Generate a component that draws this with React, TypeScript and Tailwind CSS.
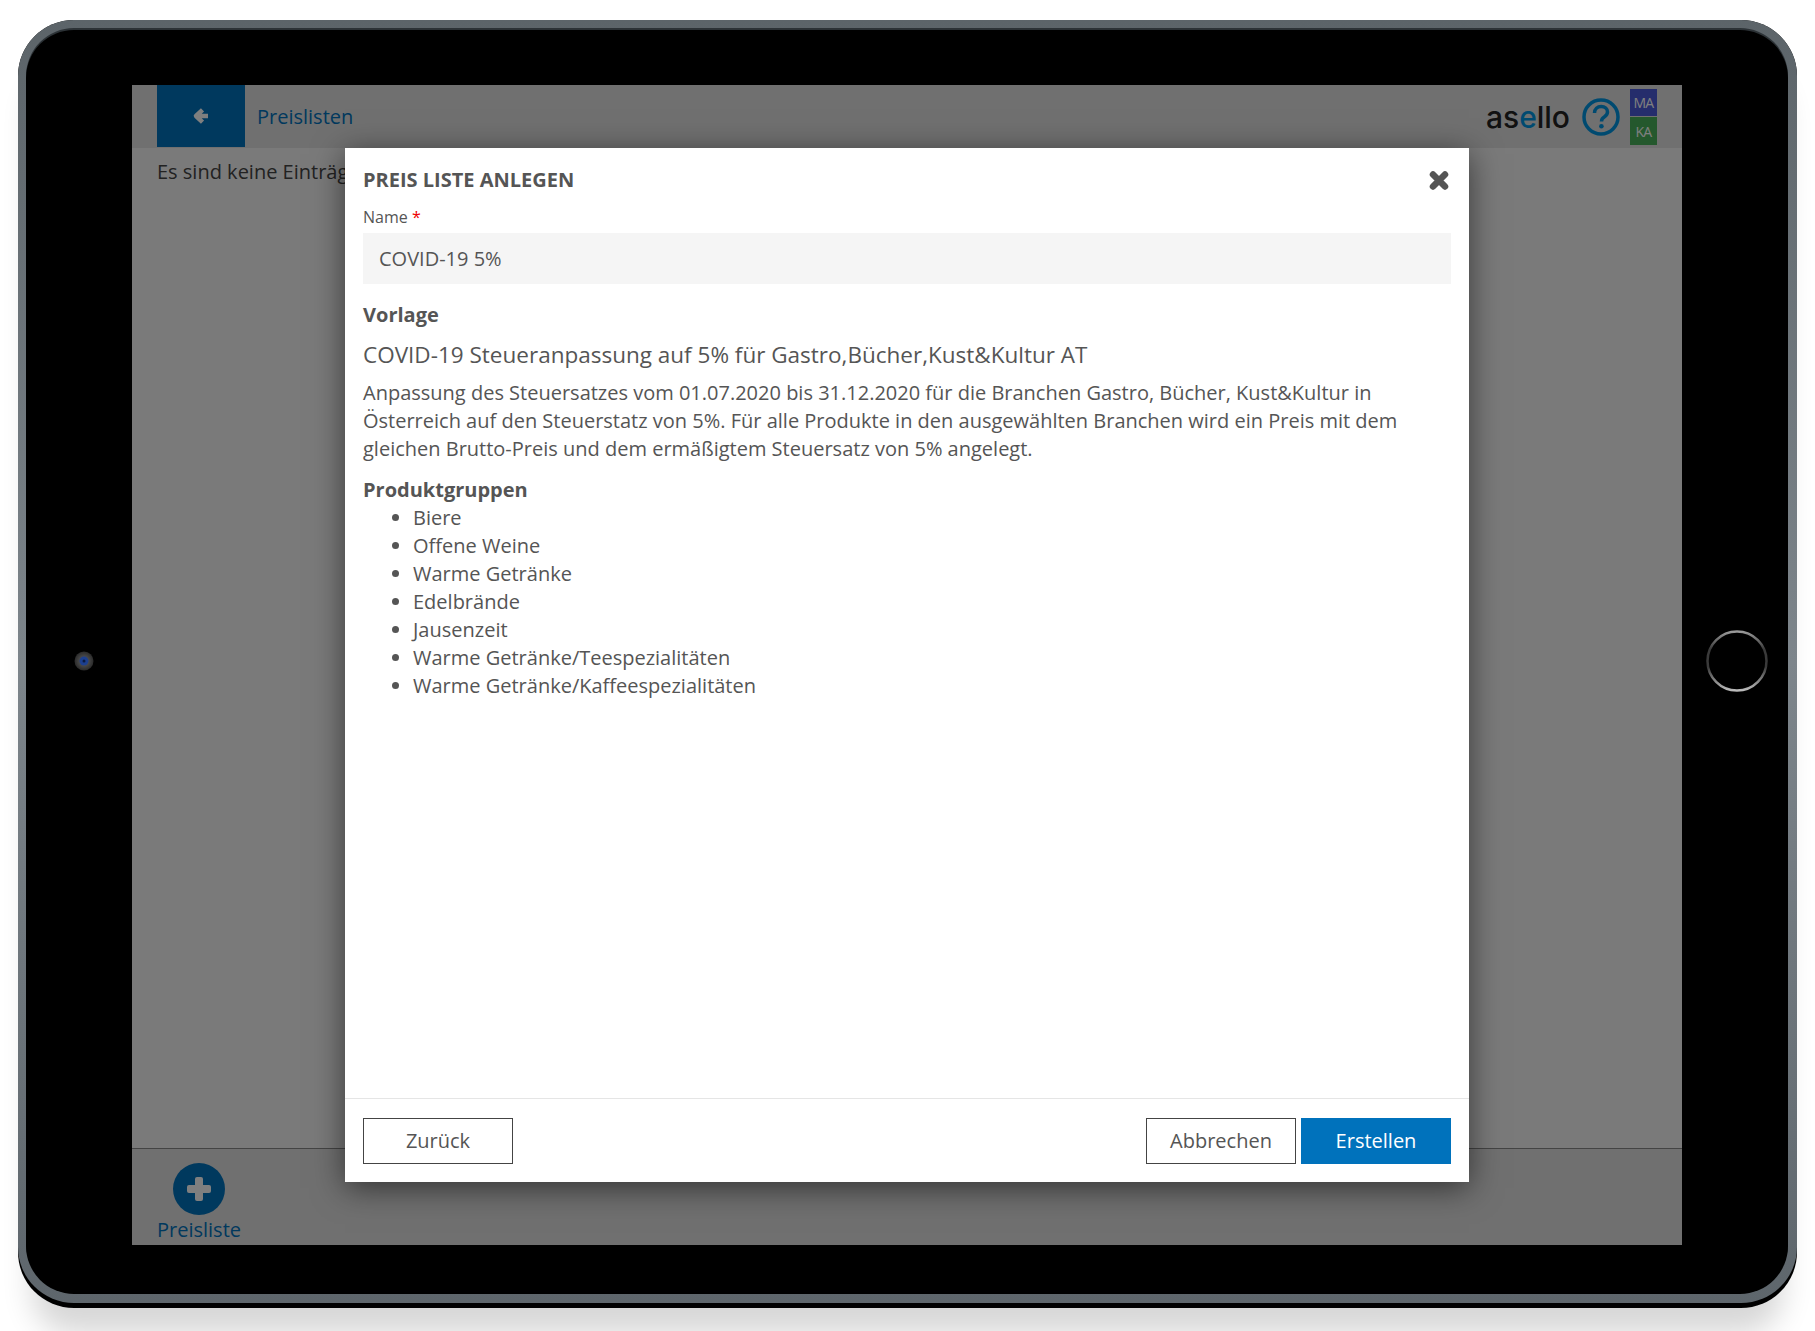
const groups = [
  'Biere',
  'Offene Weine',
  'Warme Getränke',
  'Edelbrände',
  'Jausenzeit',
  'Warme Getränke/Teespezialitäten',
  'Warme Getränke/Kaffeespezialitäten',
];

function ArrowIcon() {
  return (
    <svg width="18" height="18" viewBox="0 0 18 18" fill="none" stroke="white" strokeWidth="4.5" strokeLinejoin="round">
      <path d="M10.500 2.800 L4 9 L10.500 15.200 M4 9 H16" />
    </svg>
  );
}

function PlusIcon() {
  return (
    <svg width="24" height="24" viewBox="0 0 24 24" fill="white">
      <rect x="8" y="0" width="8" height="24" rx="2" />
      <rect x="0" y="8" width="24" height="8" rx="2" />
    </svg>
  );
}

function CloseIcon() {
  return (
    <svg width="20" height="21" viewBox="0 0 20 21" fill="none" stroke="#555" strokeWidth="6.5" strokeLinecap="round">
      <path d="M4 4.500 L16 16.500 M16 4.500 L4 16.500" />
    </svg>
  );
}

function HelpIcon() {
  return (
    <svg width="38" height="38" viewBox="0 0 38 38" fill="none" stroke="#0095e0">
      <circle cx="19" cy="19" r="17" strokeWidth="3.500" />
      <path d="M12.500 15c0-4 3-6.500 6.700-6.500 3.700 0 6.300 2.400 6.300 5.500 0 2.600-1.500 3.800-3.300 5-1.900 1.200-2.700 2.200-2.700 4.500" strokeWidth="3.500" />
      <circle cx="19.400" cy="28.300" r="2.300" fill="#0095e0" stroke="none" />
    </svg>
  );
}

function Camera() {
  return (
    <svg width="20" height="20" viewBox="0 0 20 20" className="mb-[2px] shrink-0">
      <defs>
        <radialGradient id="lens">
          <stop offset="0" stopColor="#666" />
          <stop offset="1" stopColor="#2a2a2a" />
        </radialGradient>
      </defs>
      <circle cx="10" cy="10" r="9.500" fill="url(#lens)" />
      <circle cx="10" cy="10" r="4.500" fill="#1c3f8f" />
      <circle cx="10" cy="10" r="1.500" fill="#0a1a40" />
    </svg>
  );
}

function HomeButton() {
  return (
    <svg width="62" height="62" viewBox="0 0 62 62" fill="none" className="mb-[2px] ml-[24px] shrink-0">
      <defs>
        <linearGradient id="ring" x1="0" y1="0" x2="0" y2="1">
          <stop offset="0" stopColor="#999" />
          <stop offset="0.3" stopColor="#3a3a3a" />
          <stop offset="0.6" stopColor="#3a3a3a" />
          <stop offset="1" stopColor="#bbb" />
        </linearGradient>
      </defs>
      <circle cx="31" cy="31" r="29.500" stroke="url(#ring)" strokeWidth="2.500" />
    </svg>
  );
}

function PriceListDialog() {
  return (
    <div className="flex h-[1034px] w-[1124px] flex-col bg-white text-[20px] leading-[28px] text-[#555] shadow-[0_6px_30px_rgba(0,0,0,0.55)]">
      <div className="flex-1 px-[18px]">
        <div className="flex h-[54px] items-center justify-between pt-[9px]">
          <h2 className="text-[20px] font-bold uppercase">Preis Liste anlegen</h2>
          <span className="mr-[2px] mt-[2px]">
            <CloseIcon />
          </span>
        </div>
        <label className="block text-[16px] leading-[31px]">
          Name <span className="text-[#e00]">*</span>
        </label>
        <div className="mb-[17px] flex h-[51px] items-center bg-[#f5f5f5] px-[16px]">COVID-19 5%</div>
        <h3 className="font-bold">Vorlage</h3>
        <h4 className="mt-[11px] text-[22.500px] leading-[30px]">COVID-19 Steueranpassung auf 5% für Gastro,Bücher,Kust&amp;Kultur AT</h4>
        <p className="mt-[9px]">
          Anpassung des Steuersatzes vom 01.07.2020 bis 31.12.2020 für die Branchen Gastro, Bücher, Kust&amp;Kultur in
          <br />
          Österreich auf den Steuerstatz von 5%. Für alle Produkte in den ausgewählten Branchen wird ein Preis mit dem
          <br />
          gleichen Brutto-Preis und dem ermäßigtem Steuersatz von 5% angelegt.
        </p>
        <h3 className="mt-[13px] font-bold">Produktgruppen</h3>
        <ul className="list-disc pl-[50px]">
          {groups.map((group) => (
            <li key={group}>{group}</li>
          ))}
        </ul>
      </div>
      <div className="flex h-[84px] items-start justify-between border-t border-[#e5e5e5] px-[18px] pt-[19px]">
        <button className="h-[46px] w-[150px] border border-[#444] bg-white">Zurück</button>
        <div className="flex gap-[5px]">
          <button className="h-[46px] w-[150px] border border-[#444] bg-white">Abbrechen</button>
          <button className="h-[46px] w-[150px] bg-[#0072bc] text-white">Erstellen</button>
        </div>
      </div>
    </div>
  );
}

export default function App() {
  return (
    <div className="h-[1331px] w-[1815px] overflow-hidden bg-white pl-[18px] pt-[20px] font-['Open_Sans',sans-serif]">
      {/* tablet body */}
      <div className="h-[1288px] w-[1779px] rounded-[56px] bg-black pb-[5px] shadow-[0_40px_30px_-14px_rgba(0,0,0,0.16)]">
        <div className="h-full rounded-[56px] bg-gradient-to-b from-[#5c6469] via-[#7d858b] to-[#5e666c] pb-[9px] pl-[8px] pr-[9px] pt-[10px]">
          <div className="flex h-full items-center rounded-[48px] bg-black pl-[48px] shadow-[0_-2px_0_0_#2c3236]">
            <Camera />
            {/* screen */}
            <div className="relative ml-[38px] mt-[6px] flex h-[1160px] w-[1550px] flex-col bg-[#f5f5f5] text-[20px]">
              <header className="flex h-[63px] items-center justify-between bg-[#e0e0e0] px-[25px]">
                <div className="flex h-full items-center">
                  <div className="flex h-[62px] w-[88px] items-center justify-center self-start bg-[#0072bc]">
                    <ArrowIcon />
                  </div>
                  <span className="ml-[12px] text-[#0072bc]">Preislisten</span>
                </div>
                <div className="flex items-center">
                  <span className="font-['Inter',sans-serif] text-[30px] font-medium leading-none text-[#222]">
                    as<span className="text-[#0095e0]">e</span>llo
                  </span>
                  <span className="ml-[12px]">
                    <HelpIcon />
                  </span>
                  <div className="ml-[10px] flex flex-col gap-px self-start pt-px text-[14px] tracking-tighter text-white">
                    <span className="flex h-[27px] w-[27px] items-center justify-center bg-[#4a5ad8]">MA</span>
                    <span className="flex h-[28px] w-[27px] items-center justify-center bg-[#48b05a]">KA</span>
                  </div>
                </div>
              </header>
              <main className="flex-1 px-[25px] pt-[9px] text-[#444]">Es sind keine Einträge</main>
              <footer className="flex h-[97px] flex-col items-start border-t border-[#888] bg-[#e0e0e0] pl-[25px] pt-[14px]">
                <div className="flex flex-col items-center text-[#0072bc]">
                  <div className="flex h-[52px] w-[52px] items-center justify-center rounded-full bg-[#0072bc]">
                    <PlusIcon />
                  </div>
                  <span className="mt-[1px] leading-[28px]">Preisliste</span>
                </div>
              </footer>
              {/* modal backdrop */}
              <div className="absolute inset-0 bg-black/50 pl-[213px] pt-[63px]">
                <PriceListDialog />
              </div>
            </div>
            <HomeButton />
          </div>
        </div>
      </div>
    </div>
  );
}
